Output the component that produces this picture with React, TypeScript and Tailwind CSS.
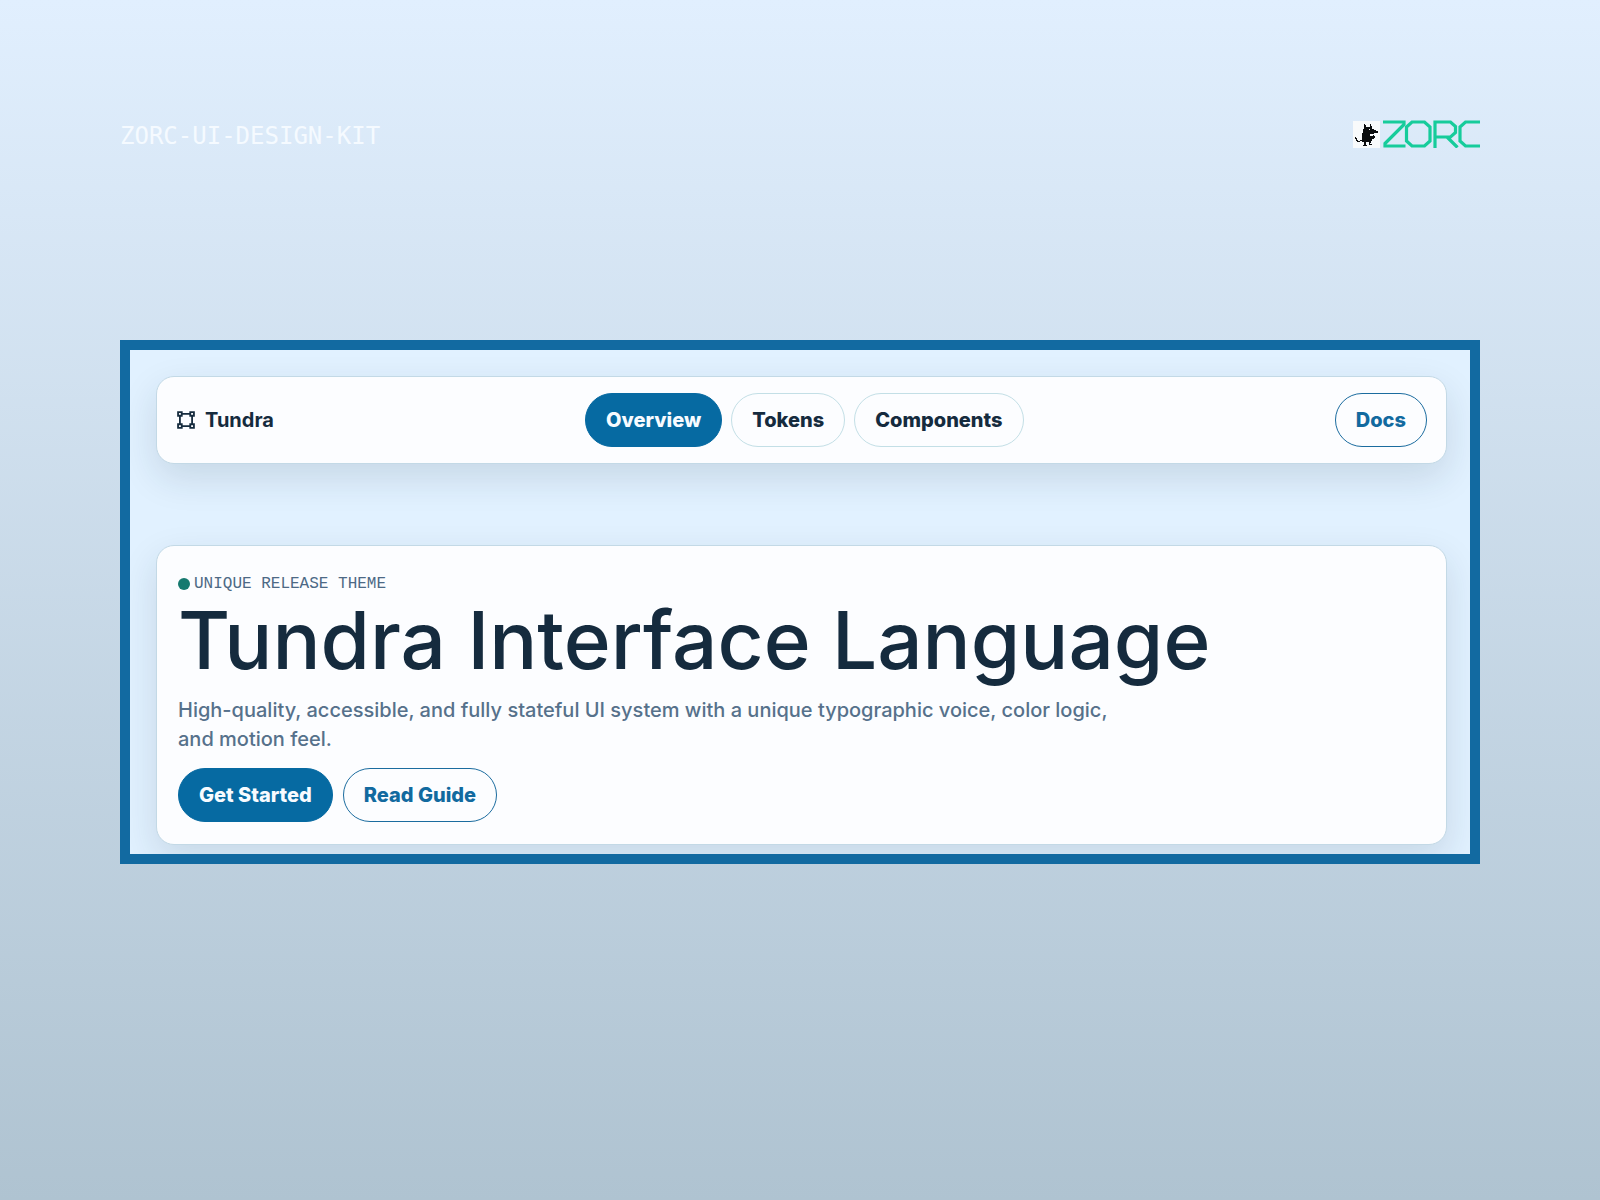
import React from 'react';
import { clsx } from 'clsx';

const tabs = ['Overview', 'Tokens', 'Components'];

const pill = 'h-[54px] px-5 rounded-full border text-xl font-extrabold whitespace-nowrap';
const card = 'rounded-[18px] border border-[#c3d9e6] bg-[#fcfdff] shadow-[0_14px_36px_rgba(21,43,60,0.13)]';

function Logo() {
  return (
    <div className="flex items-center gap-[2px]">
      <svg className="w-[27px] h-[27px]" viewBox="0 0 27 27" aria-hidden="true">
        <rect width="27" height="27" fill="#f8fafb" />
        <path
          d="M11 3h1v1h1v2h4V3h1v2h1v3h2v1h2v1h2v2h-4v1h-4v2h3v-1h1v1h1v2h-1v1h-2v2h-1v2h-1v1h2v1h-3v-3h-3v3h1v1h-4v-1h1v-3H9v-1H7v1H4v-1H3v-2H2v-2h1v1h1v2h1v1h2v-1h2v-7h1V8h1z"
          fill="#0b0d0e"
        />
        <path d="M16 8h1v1h-1z" fill="#f8fafb" />
      </svg>
      <svg className="w-[98px] h-[28px]" viewBox="0 0 98 28" fill="none" stroke="#16cc9b" strokeWidth="3.200" role="img" aria-label="Zorc">
        <path d="M1 2h21v2.500L3 23.500V26h20.500" />
        <path d="M30 2h12.500l5.500 5v14l-5.500 5H30l-5.500-5V7z" />
        <path d="M53 28V2H68.500l5 4.500v6L68.500 17H53M65 17L75.500 27.500" />
        <path d="M98 2H83.500L78 7v14l5.500 5H98" />
      </svg>
    </div>
  );
}

function NavBar() {
  return (
    <header className={clsx(card, 'flex items-center justify-between pl-5 pr-[19px] py-4')}>
      <div className="flex items-center gap-[10px] text-xl font-bold">
        <svg className="w-[18px] h-[18px]" viewBox="0 0 17 17" fill="none" stroke="currentColor" strokeWidth="1.700" aria-hidden="true">
          <path d="M1 1h3.500v3.500H1zM12.500 1H16v3.500h-3.500zM1 12.500h3.500V16H1zM12.500 12.500H16V16h-3.500zM4.500 2.750h8M4.500 14.250h8M2.750 4.500v8M14.250 4.500v8" />
        </svg>
        Tundra
      </div>
      <nav className="flex gap-[9px]">
        {tabs.map((tab, i) => (
          <button
            key={tab}
            type="button"
            className={clsx(pill, i === 0 ? 'border-[#066aa2] bg-[#066aa2] text-[#f7fbff]' : 'border-[#c3dfe6]')}
          >
            {tab}
          </button>
        ))}
      </nav>
      <button type="button" className={clsx(pill, 'border-[#1b6c9f] text-[#126a9f]')}>
        Docs
      </button>
    </header>
  );
}

function Hero() {
  return (
    <section className={clsx(card, 'px-[21px] pt-[26px] pb-[22px]')}>
      <p className="flex items-center gap-1 font-['Liberation_Mono',monospace] text-base text-[#4d6985]">
        <span className="size-3 rounded-full bg-[#16796f]" />
        UNIQUE RELEASE THEME
      </p>
      <h1 className="text-[80px] leading-[88px] font-medium">Tundra Interface Language</h1>
      <p className="mt-3 max-w-[960px] text-xl leading-[29px] font-medium text-[#56718b]">
        High-quality, accessible, and fully stateful UI system with a unique typographic voice, color logic, and motion feel.
      </p>
      <div className="mt-[14px] flex gap-[10px]">
        <button type="button" className={clsx(pill, 'border-[#066aa2] bg-[#066aa2] text-[#f7fbff]')}>
          Get Started
        </button>
        <button type="button" className={clsx(pill, 'border-[#1b6c9f] text-[#126a9f]')}>
          Read Guide
        </button>
      </div>
    </section>
  );
}

export default function App() {
  return (
    <main className="min-h-screen bg-linear-to-b from-[#e1effe] to-[#afc3d1] px-[120px] pt-[120px] font-['Inter',sans-serif] text-[#152b3e]">
      <div className="flex items-start justify-between">
        <p className="font-['DejaVu_Sans_Mono',monospace] text-2xl leading-8 text-[#f5faff]">ZORC-UI-DESIGN-KIT</p>
        <Logo />
      </div>
      <div className="mt-[188px] flex flex-col gap-[81px] overflow-hidden border-[10px] border-[#126aa1] bg-[#e1f1ff] pt-[26px] pr-[23px] pb-[9px] pl-[26px]">
        <NavBar />
        <Hero />
      </div>
    </main>
  );
}
